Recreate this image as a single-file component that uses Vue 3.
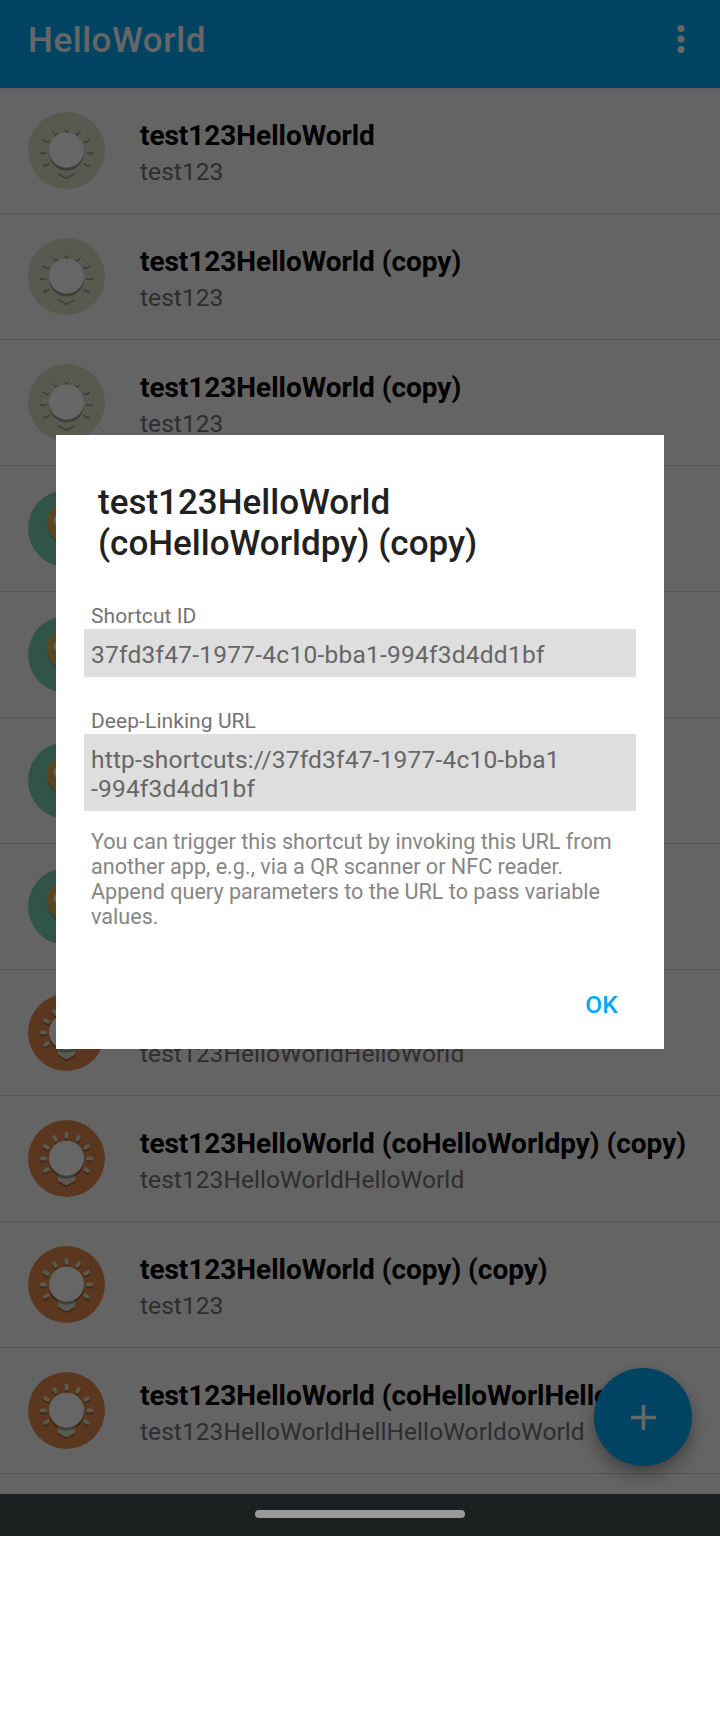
<script setup>
const shortcuts = [
  { name: 'test123HelloWorld', info: 'test123', tone: 'beige' },
  { name: 'test123HelloWorld (copy)', info: 'test123', tone: 'beige' },
  { name: 'test123HelloWorld (copy)', info: 'test123', tone: 'beige' },
  { name: '', info: '', tone: 'green' },
  { name: '', info: '', tone: 'green' },
  { name: '', info: '', tone: 'green' },
  { name: '', info: '', tone: 'green' },
  { name: '', info: 'test123HelloWorldHelloWorld', tone: 'orange' },
  { name: 'test123HelloWorld (coHelloWorldpy) (copy)', info: 'test123HelloWorldHelloWorld', tone: 'orange' },
  { name: 'test123HelloWorld (copy) (copy)', info: 'test123', tone: 'orange' },
  { name: 'test123HelloWorld (coHelloWorlHello', info: 'test123HelloWorldHellHelloWorldoWorld', tone: 'orange' },
]
const discs = { beige: '#dbdec6', green: '#78d3b2', orange: '#e28b4b' }
const rays = [-120, -90, -60, -30, 0, 30, 60, 90, 120]
</script>

<template>
  <div class="screen">
    <div class="app">
      <header class="bar">
        <h1>HelloWorld</h1>
        <svg class="more" width="8" height="30" viewBox="0 0 8 30" fill="#fff">
          <circle cx="4" cy="4.5" r="3.6" /><circle cx="4" cy="15" r="3.6" /><circle cx="4" cy="25.5" r="3.6" />
        </svg>
      </header>
      <main class="list">
        <div v-for="(s, i) in shortcuts" :key="i" class="row">
          <svg class="icon" width="77" height="77" viewBox="0 0 77 77">
            <circle cx="38.5" cy="38.5" r="38.5" :fill="discs[s.tone]" />
            <template v-if="s.tone === 'green'">
              <circle cx="39.5" cy="34" r="20.5" fill="#000" opacity=".3" />
              <circle cx="39.5" cy="32.7" r="20.5" fill="#e2b255" />
              <circle cx="31.8" cy="30.5" r="6" fill="#fff" />
            </template>
            <template v-else>
              <g transform="translate(0 1.8)" opacity=".3" stroke="#000" stroke-width="3.9" stroke-linecap="round">
                <line v-for="a in rays" :key="a" x1="38.5" y1="13.7" x2="38.5" y2="16.9" :transform="`rotate(${a} 38.5 38.5)`" />
              </g>
              <g stroke="#dbdec6" stroke-width="3.9" stroke-linecap="round">
                <line v-for="a in rays" :key="a" x1="38.5" y1="13.7" x2="38.5" y2="16.9" :transform="`rotate(${a} 38.5 38.5)`" />
              </g>
              <path d="M30 50h17v12.5l-7 4.1q-1.5.8-3 0l-7-4.1z" fill="#000" opacity=".3" />
              <path d="M30 50h17v10.7l-7 4.1q-1.5.8-3 0l-7-4.1z" fill="#dbdec6" />
              <circle cx="38.5" cy="41" r="17.5" fill="#000" opacity=".3" />
              <circle cx="38.5" cy="38.2" r="17.5" fill="#fff" />
            </template>
          </svg>
          <div class="text">
            <div class="name">{{ s.name }}</div>
            <div class="info">{{ s.info }}</div>
          </div>
        </div>
      </main>
      <div class="fab">
        <svg width="25" height="25" viewBox="0 0 25 25" fill="none" stroke="#fff" stroke-width="3.6">
          <path d="M0 12.5h25M12.5 0v25" />
        </svg>
      </div>
      <div class="scrim"></div>
    </div>
    <footer class="nav"><span class="handle"></span></footer>
    <section class="dialog">
      <h2>test123HelloWorld<br />(coHelloWorldpy) (copy)</h2>
      <div class="label">Shortcut ID</div>
      <div class="field id">37fd3f47-1977-4c10-bba1-994f3d4dd1bf</div>
      <div class="label second">Deep-Linking URL</div>
      <div class="field">http-shortcuts://37fd3f47-1977-4c10-bba1<br />-994f3d4dd1bf</div>
      <p class="note">You can trigger this shortcut by invoking this URL from<br />another app, e.g., via a QR scanner or NFC reader.<br />Append query parameters to the URL to pass variable<br />values.</p>
      <button class="ok">OK</button>
    </section>
  </div>
</template>

<style scoped>
.screen {
  position: relative;
  height: 1712px;
  background: #fff;
  font-family: Roboto, "Liberation Sans", sans-serif;
}
.app {
  position: relative;
  height: 1494px;
  overflow: hidden;
  background: #fafafa;
}
.bar {
  position: relative;
  box-sizing: border-box;
  height: 88px;
  padding: 0 35px 10px 28px;
  display: flex;
  align-items: center;
  justify-content: space-between;
  background: #03a9f4;
  box-shadow: 0 0 5px rgba(0, 0, 0, 0.18);
}
h1 {
  margin: 0;
  padding-top: 3px;
  font-size: 35px;
  line-height: 41px;
  font-weight: 500;
  letter-spacing: 0.55px;
  color: #fff;
}
.row {
  box-sizing: border-box;
  height: 126px;
  padding-left: 28px;
  display: flex;
  align-items: center;
  gap: 35px;
  border-bottom: 1px solid #d3d3d3;
}
.icon {
  flex: none;
  margin-bottom: 1px;
}
.text {
  padding-top: 4px;
  white-space: nowrap;
}
.name {
  height: 38px;
  font-size: 28px;
  line-height: 33px;
  font-weight: 700;
  letter-spacing: -0.04px;
  color: #000;
}
.info {
  height: 29px;
  font-size: 24.5px;
  line-height: 29px;
  letter-spacing: 0.065px;
  color: #737373;
}
.fab {
  position: absolute;
  left: 594px;
  top: 1368px;
  width: 98px;
  height: 98px;
  border-radius: 50%;
  display: flex;
  align-items: center;
  justify-content: center;
  background: #03a9f4;
  box-shadow: 0 10px 18px rgba(0, 0, 0, 0.28), 0 2px 9px rgba(0, 0, 0, 0.12);
}
.scrim {
  position: absolute;
  inset: 0;
  background: rgba(0, 0, 0, 0.6);
}
.nav {
  height: 42px;
  display: flex;
  align-items: center;
  justify-content: center;
  background: #1c2021;
}
.handle {
  width: 210px;
  height: 8px;
  margin-bottom: 2px;
  border-radius: 4px;
  background: #989b9a;
}
.dialog {
  position: absolute;
  left: 56px;
  top: 435px;
  width: 608px;
  height: 614px;
  box-sizing: border-box;
  padding: 47px 28px 0;
  display: flex;
  flex-direction: column;
  background: #fff;
}
h2 {
  margin: 0 0 40px 14px;
  font-size: 35px;
  line-height: 41px;
  font-weight: 500;
  color: #212121;
}
.label {
  padding-left: 7px;
  font-size: 21px;
  line-height: 25px;
  letter-spacing: 0.07px;
  color: #737373;
}
.second {
  margin-top: 32px;
}
.field {
  padding: 11px 7px 8px;
  font-size: 24.5px;
  line-height: 29px;
  letter-spacing: 0.19px;
  color: #666;
  background: #dedede;
}
.id {
  letter-spacing: 0.235px;
}
.note {
  margin: 18px 0 0;
  padding-left: 7px;
  font-size: 21.6px;
  line-height: 25px;
  color: #868686;
}
.ok {
  align-self: flex-end;
  margin: 61px 18px 0 0;
  padding: 0;
  border: 0;
  background: none;
  font: 500 24.5px/29px Roboto, "Liberation Sans", sans-serif;
  letter-spacing: 0.2px;
  color: #03a9f4;
}
</style>
